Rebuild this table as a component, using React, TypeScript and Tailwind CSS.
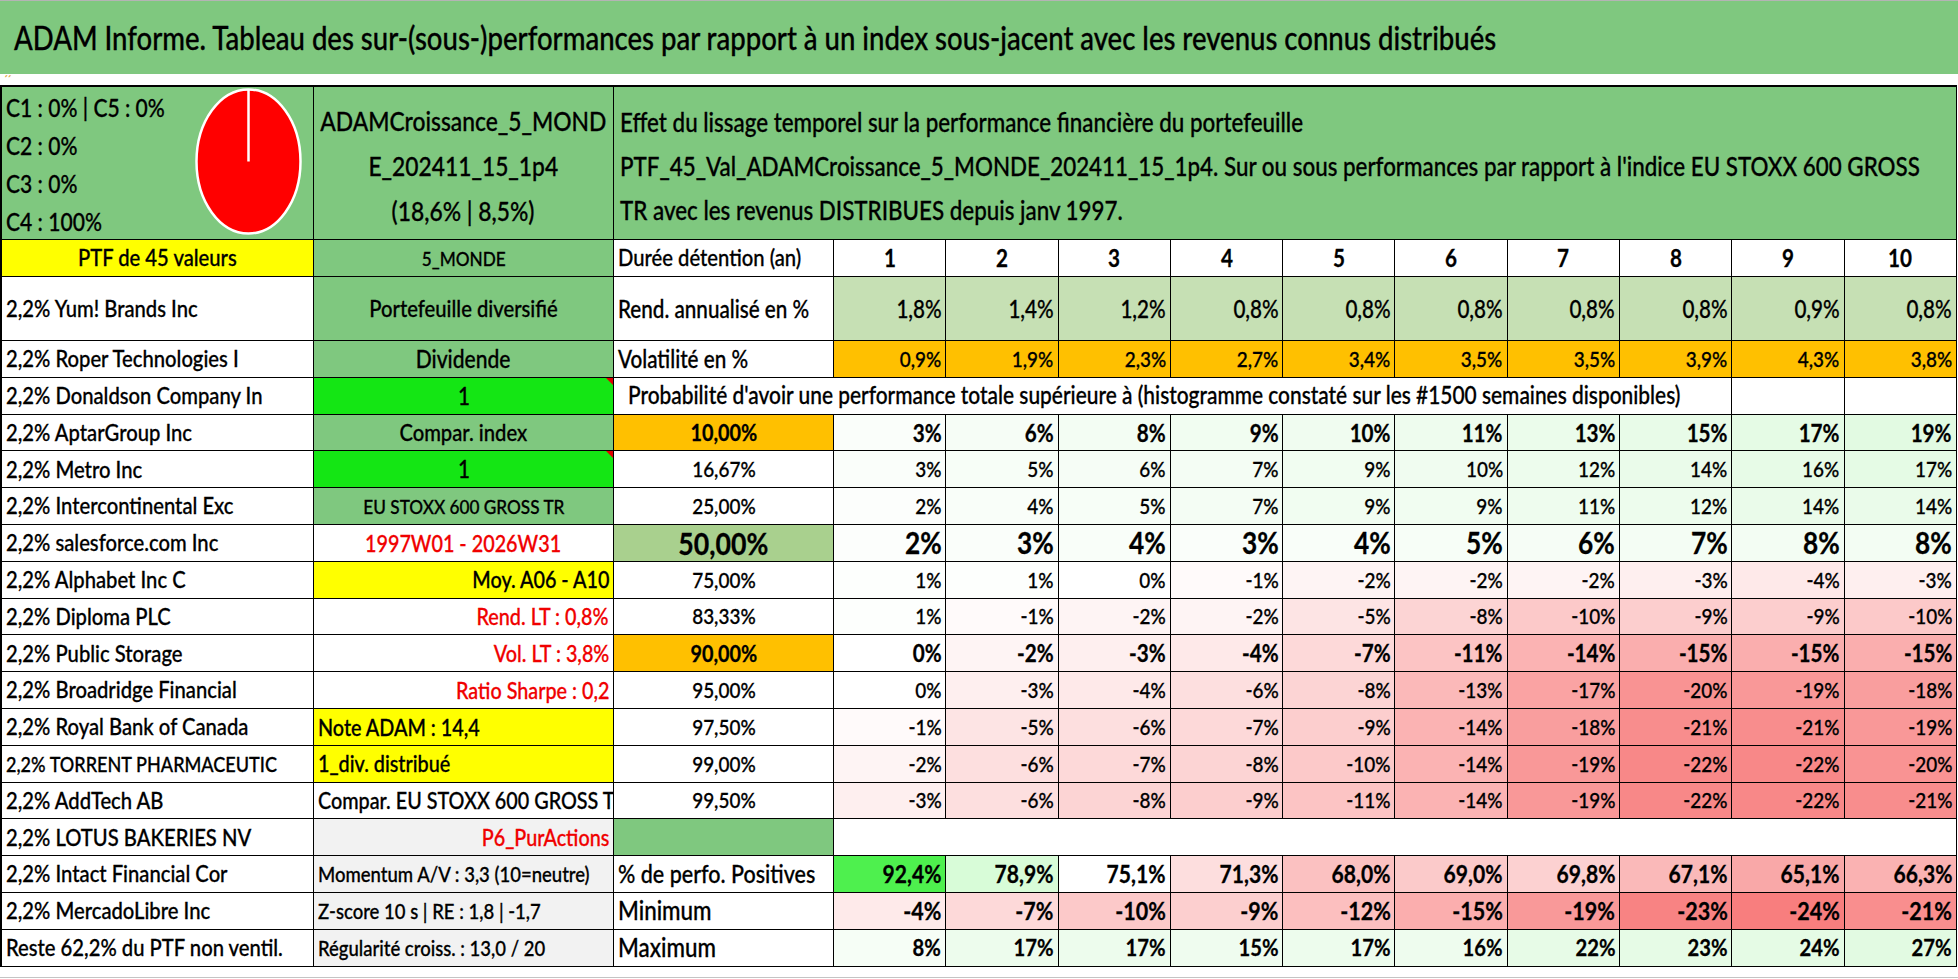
import React from "react";
import { clsx, type ClassValue } from "clsx";
import { twMerge } from "tailwind-merge";

const cn = (...inputs: ClassValue[]) => twMerge(clsx(inputs));

type Rgb = [number, number, number];
type Align = "left" | "center" | "right";

const WHITE: Rgb = [255, 255, 255];

// linear blend between two colours, t clamped to [0, 1]
const mix = (a: Rgb, b: Rgb, t: number) => {
  const k = Math.max(0, Math.min(1, t));
  return `rgb(${a.map((v, i) => Math.round(v + (b[i] - v) * k)).join(",")})`;
};

// conditional formatting of the probability block
const probColor = (v: number) =>
  v > 0 ? mix(WHITE, [226, 250, 226], v / 19) : v < 0 ? mix(WHITE, [248, 136, 136], -v / 22) : "#ffffff";

const positiveColor = (v: number) =>
  v >= 75.1
    ? mix(WHITE, [78, 240, 78], (v - 75.1) / (92.4 - 75.1))
    : mix(WHITE, [249, 168, 168], (75.1 - v) / 10);

const minColor = (v: number) => mix(WHITE, [248, 126, 126], -v / 24);
const maxColor = (v: number) => mix(WHITE, [226, 250, 226], v / 27);

const GREEN = "bg-[#7fc87f]";

const origins: Record<Align, string> = {
  left: "origin-left",
  center: "origin-center",
  right: "origin-right",
};

// the sheet was captured squeezed horizontally, text is narrowed the same way
const T = ({ align = "left", children }: { align?: Align; children: React.ReactNode }) => (
  <span className={cn("inline-block scale-x-[0.86]", origins[align])}>{children}</span>
);

interface CellProps {
  align?: Align;
  comment?: boolean;
  className?: string;
  style?: React.CSSProperties;
  children?: React.ReactNode;
}

const Cell = ({ align = "left", comment, className, style, children }: CellProps) => (
  <div
    style={style}
    className={cn(
      "relative flex items-center overflow-hidden whitespace-nowrap border-b border-r border-black bg-white px-1 text-[22px] font-medium leading-none",
      align === "center" && "justify-center",
      align === "right" && "justify-end",
      className
    )}
  >
    {children != null && <T align={align}>{children}</T>}
    {comment && (
      <span className="absolute right-0 top-0 h-0 w-0 border-l-[7px] border-t-[7px] border-l-transparent border-t-[#e00000]" />
    )}
  </div>
);

const names = [
  "2,2% Yum! Brands Inc",
  "2,2% Roper Technologies I",
  "2,2% Donaldson Company In",
  "2,2% AptarGroup Inc",
  "2,2% Metro Inc",
  "2,2% Intercontinental Exc",
  "2,2% salesforce.com Inc",
  "2,2% Alphabet Inc C",
  "2,2% Diploma PLC",
  "2,2% Public Storage",
  "2,2% Broadridge Financial",
  "2,2% Royal Bank of Canada",
  "2,2% TORRENT PHARMACEUTIC",
  "2,2% AddTech AB",
  "2,2% LOTUS BAKERIES NV",
  "2,2% Intact Financial Cor",
  "2,2% MercadoLibre Inc",
  "Reste 62,2% du PTF non ventil.",
];

const sideCells: { text: string; align: Align; className: string; comment?: boolean }[] = [
  { text: "Portefeuille diversifié", align: "center", className: `${GREEN} text-[23.5px]` },
  { text: "Dividende", align: "center", className: `${GREEN} text-[24.5px]` },
  { text: "1", align: "center", className: "bg-[#14e614] text-[24px]", comment: true },
  { text: "Compar. index", align: "center", className: `${GREEN} text-[23.5px]` },
  { text: "1", align: "center", className: "bg-[#14e614] text-[24px]", comment: true },
  { text: "EU STOXX 600 GROSS TR", align: "center", className: `${GREEN} text-[20px]` },
  { text: "1997W01 - 2026W31", align: "center", className: "text-[23px] text-[#f00000]" },
  { text: "Moy. A06 - A10", align: "right", className: "bg-[#ffff00] text-[23px]" },
  { text: "Rend. LT : 0,8%", align: "right", className: "text-[23px] text-[#f00000]" },
  { text: "Vol. LT : 3,8%", align: "right", className: "text-[23px] text-[#f00000]" },
  { text: "Ratio Sharpe : 0,2", align: "right", className: "text-[23px] text-[#f00000]" },
  { text: "Note ADAM : 14,4", align: "left", className: "bg-[#ffff00] text-[23px]" },
  { text: "1_div. distribué", align: "left", className: "bg-[#ffff00] text-[23px]" },
  { text: "Compar. EU STOXX 600 GROSS TR", align: "left", className: "text-[23px]" },
  { text: "P6_PurActions", align: "right", className: "bg-[#f2f2f2] text-[23px] text-[#f00000]" },
  { text: "Momentum A/V : 3,3 (10=neutre)", align: "left", className: "bg-[#f2f2f2] text-[21.5px]" },
  { text: "Z-score 10 s | RE : 1,8 | -1,7", align: "left", className: "bg-[#f2f2f2] text-[21.5px]" },
  { text: "Régularité croiss. : 13,0 / 20", align: "left", className: "bg-[#f2f2f2] text-[21.5px]" },
];

const rend = ["1,8%", "1,4%", "1,2%", "0,8%", "0,8%", "0,8%", "0,8%", "0,8%", "0,9%", "0,8%"];
const vol = ["0,9%", "1,9%", "2,3%", "2,7%", "3,4%", "3,5%", "3,5%", "3,9%", "4,3%", "3,8%"];

interface ProbRow {
  p: string;
  pClass?: string;
  vClass?: string;
  vals: number[];
}

const probRows: ProbRow[] = [
  { p: "10,00%", pClass: "bg-[#ffc000] font-bold text-[23px]", vClass: "font-bold text-[24px]", vals: [3, 6, 8, 9, 10, 11, 13, 15, 17, 19] },
  { p: "16,67%", vals: [3, 5, 6, 7, 9, 10, 12, 14, 16, 17] },
  { p: "25,00%", vals: [2, 4, 5, 7, 9, 9, 11, 12, 14, 14] },
  { p: "50,00%", pClass: "bg-[#a9d08e] font-bold text-[31px]", vClass: "font-bold text-[30.5px]", vals: [2, 3, 4, 3, 4, 5, 6, 7, 8, 8] },
  { p: "75,00%", vals: [1, 1, 0, -1, -2, -2, -2, -3, -4, -3] },
  { p: "83,33%", vals: [1, -1, -2, -2, -5, -8, -10, -9, -9, -10] },
  { p: "90,00%", pClass: "bg-[#ffc000] font-bold text-[23px]", vClass: "font-bold text-[24px]", vals: [0, -2, -3, -4, -7, -11, -14, -15, -15, -15] },
  { p: "95,00%", vals: [0, -3, -4, -6, -8, -13, -17, -20, -19, -18] },
  { p: "97,50%", vals: [-1, -5, -6, -7, -9, -14, -18, -21, -21, -19] },
  { p: "99,00%", vals: [-2, -6, -7, -8, -10, -14, -19, -22, -22, -20] },
  { p: "99,50%", vals: [-3, -6, -8, -9, -11, -14, -19, -22, -22, -21] },
];

const positives = [92.4, 78.9, 75.1, 71.3, 68.0, 69.0, 69.8, 67.1, 65.1, 66.3];
const minimum = [-4, -7, -10, -9, -12, -15, -19, -23, -24, -21];
const maximum = [8, 17, 17, 15, 17, 16, 22, 23, 24, 27];

const pct = (v: number, digits = 0) => `${v.toFixed(digits).replace(".", ",")}%`;

const RightPart = ({ row }: { row: number }) => {
  if (row === 0)
    return (
      <>
        <Cell className="text-[24px]">Rend. annualisé en %</Cell>
        {rend.map((v, i) => (
          <Cell key={i} align="right" className="bg-[#c6e0b4] text-[24px]">
            {v}
          </Cell>
        ))}
      </>
    );
  if (row === 1)
    return (
      <>
        <Cell className="text-[24px]">Volatilité en %</Cell>
        {vol.map((v, i) => (
          <Cell key={i} align="right" className="bg-[#ffc000]">
            {v}
          </Cell>
        ))}
      </>
    );
  if (row === 2)
    return (
      <>
        <Cell className="col-span-9 pl-[14px] text-[24.3px]">
          Probabilité d'avoir une performance totale supérieure à (histogramme constaté sur les #1500 semaines disponibles)
        </Cell>
        <Cell />
        <Cell />
      </>
    );
  if (row >= 3 && row <= 13) {
    const r = probRows[row - 3];
    return (
      <>
        <Cell align="center" className={r.pClass}>
          {r.p}
        </Cell>
        {r.vals.map((v, i) => (
          <Cell key={i} align="right" className={r.vClass} style={{ backgroundColor: probColor(v) }}>
            {pct(v)}
          </Cell>
        ))}
      </>
    );
  }
  if (row === 14)
    return (
      <>
        <Cell className={GREEN} />
        <Cell className="col-span-10" />
      </>
    );
  if (row === 15)
    return (
      <>
        <Cell className="text-[25px]">% de perfo. Positives</Cell>
        {positives.map((v, i) => (
          <Cell key={i} align="right" className="text-[24.5px] font-bold" style={{ backgroundColor: positiveColor(v) }}>
            {pct(v, 1)}
          </Cell>
        ))}
      </>
    );
  if (row === 16)
    return (
      <>
        <Cell className="text-[26px]">Minimum</Cell>
        {minimum.map((v, i) => (
          <Cell key={i} align="right" className="text-[25px] font-bold" style={{ backgroundColor: minColor(v) }}>
            {pct(v)}
          </Cell>
        ))}
      </>
    );
  return (
    <>
      <Cell className="text-[26px]">Maximum</Cell>
      {maximum.map((v, i) => (
        <Cell key={i} align="right" className="text-[23.5px] font-bold" style={{ backgroundColor: maxColor(v) }}>
          {pct(v)}
        </Cell>
      ))}
    </>
  );
};

const Pie = () => (
  <svg viewBox="0 0 107 147" className="mt-[1px] h-[147px] w-[107px] shrink-0">
    <ellipse cx="53.5" cy="73.5" rx="52" ry="72" fill="#ff0000" stroke="#ffffff" strokeWidth="2.5" />
    <line x1="53.5" y1="2" x2="53.5" y2="73.5" stroke="#ffffff" strokeWidth="2.5" />
  </svg>
);

export default function App() {
  return (
    <div className="min-h-screen w-[1958px] bg-white font-['Lato','Liberation_Sans',sans-serif] font-medium text-black [-webkit-text-stroke:0.3px]">
      <div className="flex h-[74px] items-center whitespace-nowrap border-t border-[#b4b4b4] bg-[#7fc87f] pl-[14px] text-[32px]">
        <T>
          ADAM Informe. Tableau des sur-(sous-)performances par rapport à un index sous-jacent avec les revenus connus
          distribués
        </T>
      </div>
      <div className="relative h-[11px]">
        <span className="absolute left-[4px] top-[1px] text-[9px] leading-none text-[#e0a030]">´´</span>
      </div>

      <div className="grid w-[1957px] grid-cols-[312px_300px_220px_repeat(10,112.3px)] grid-rows-[153px_37px_64px_repeat(17,36.8px)] border-l-2 border-t-2 border-black">
        {/* header row */}
        <div className={cn(GREEN, "flex overflow-hidden border-b border-r border-black")}>
          <div className="w-[193px] whitespace-nowrap pl-1 pt-[2px] text-[24.5px] leading-[38px]">
            <div><T>C1 : 0% | C5 : 0%</T></div>
            <div><T>C2 : 0%</T></div>
            <div><T>C3 : 0%</T></div>
            <div><T>C4 : 100%</T></div>
          </div>
          <Pie />
        </div>
        <div className={cn(GREEN, "flex flex-col items-center overflow-hidden whitespace-nowrap border-b border-r border-black pt-[12px] text-[26.5px] leading-[45px]")}>
          <T align="center">ADAMCroissance_5_MOND</T>
          <T align="center">E_202411_15_1p4</T>
          <T align="center">(18,6% | 8,5%)</T>
        </div>
        <div className={cn(GREEN, "col-span-11 flex flex-col items-start overflow-hidden whitespace-nowrap border-b border-r border-black pl-[6px] pt-[13px] text-[26px] leading-[44px]")}>
          <T>Effet du lissage temporel sur la performance financière du portefeuille</T>
          <T>
            PTF_45_Val_ADAMCroissance_5_MONDE_202411_15_1p4. Sur ou sous performances par rapport à l'indice EU STOXX 600
            GROSS
          </T>
          <T>TR avec les revenus DISTRIBUES depuis janv 1997.</T>
        </div>

        {/* column headers */}
        <Cell align="center" className="bg-[#ffff00] text-[23.5px]">
          PTF de 45 valeurs
        </Cell>
        <Cell align="center" className={cn(GREEN, "text-[20px]")}>
          5_MONDE
        </Cell>
        <Cell className="text-[23.5px]">Durée détention (an)</Cell>
        {Array.from({ length: 10 }, (_, i) => (
          <Cell key={i} align="center" className="text-[24px] font-bold">
            {i + 1}
          </Cell>
        ))}

        {/* body */}
        {names.map((name, row) => (
          <React.Fragment key={name}>
            <Cell className={name.includes("TORRENT") ? "text-[21px]" : "text-[23.5px]"}>{name}</Cell>
            <Cell align={sideCells[row].align} comment={sideCells[row].comment} className={sideCells[row].className}>
              {sideCells[row].text}
            </Cell>
            <RightPart row={row} />
          </React.Fragment>
        ))}
      </div>
      <div className="mt-[10px] h-px bg-[#c4c4c4]" />
    </div>
  );
}
